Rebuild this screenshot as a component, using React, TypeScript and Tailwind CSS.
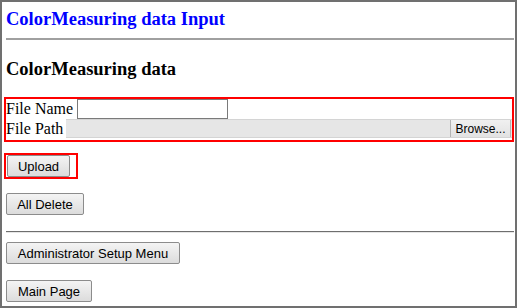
import React from 'react';

interface GrayButtonProps {
    label: string;
    width: string;
}

// Old-style gray push button
function GrayButton({ label, width }: GrayButtonProps) {
    return (
        <button
            type="button"
            className={`${width} h-[22px] flex items-center justify-center border border-[#8c8c8c] rounded-[2px] bg-gradient-to-b from-[#f4f4f4] to-[#dcdcdc] text-[13px] leading-none text-black font-['Liberation_Sans',Arial,sans-serif]`}
        >
            {label}
        </button>
    );
}

export default function App() {
    return (
        <div className="w-[517px] h-[308px] border-2 border-[#707070] bg-white flex flex-col font-['Liberation_Serif','Times_New_Roman',serif] text-black">
            <h1 className="mt-[7px] ml-[4px] text-[18.5px] leading-[21px] font-bold text-[#0000ff]">
                ColorMeasuring data Input
            </h1>

            <div className="mt-[8px] ml-[4px] mr-[1px] h-[2px] bg-[#a0a0a0]"></div>

            <h2 className="mt-[19px] ml-[4px] text-[18.5px] leading-[21px] font-bold">
                ColorMeasuring data
            </h2>

            {/* File inputs */}
            <div className="mt-[17px] ml-[2px] mr-[1px] h-[45px] border-2 border-[#ff0000] flex flex-col text-[16px] leading-[18px]">
                <div className="h-[20px] flex items-center">
                    <span>File Name</span>
                    <div className="ml-[4px] w-[151px] h-[20px] border border-[#7a7a7a] bg-white"></div>
                </div>
                <div className="h-[21px] flex items-start">
                    <span className="mt-[1px]">File Path</span>
                    <div className="ml-[3px] flex-1 h-[19px] flex border-y border-[#d4d4d4] bg-[#e6e6e6]">
                        <div className="flex-1"></div>
                        <div className="w-[61px] h-full flex items-center justify-center border-x border-[#b4b4b4] bg-gradient-to-b from-[#f0f0f0] to-[#e2e2e2] text-[12px] leading-none font-['Liberation_Sans',Arial,sans-serif]">
                            Browse...
                        </div>
                        <div className="w-[1px]"></div>
                    </div>
                </div>
            </div>

            <div className="mt-[11px] ml-[2px] w-fit border-2 border-[#ff0000] pl-[1px] pr-[6px]">
                <GrayButton label="Upload" width="w-[63px]" />
            </div>

            <div className="mt-[14px] ml-[4px]">
                <GrayButton label="All Delete" width="w-[78px]" />
            </div>

            <div className="mt-[16px] ml-[4px] mr-[1px] h-[2px] border-t border-[#6e6e6e] border-b border-b-[#e6e6e6]"></div>

            <div className="mt-[9px] ml-[4px]">
                <GrayButton label="Administrator Setup Menu" width="w-[174px]" />
            </div>

            <div className="mt-[16px] ml-[4px]">
                <GrayButton label="Main Page" width="w-[86px]" />
            </div>
        </div>
    );
}
